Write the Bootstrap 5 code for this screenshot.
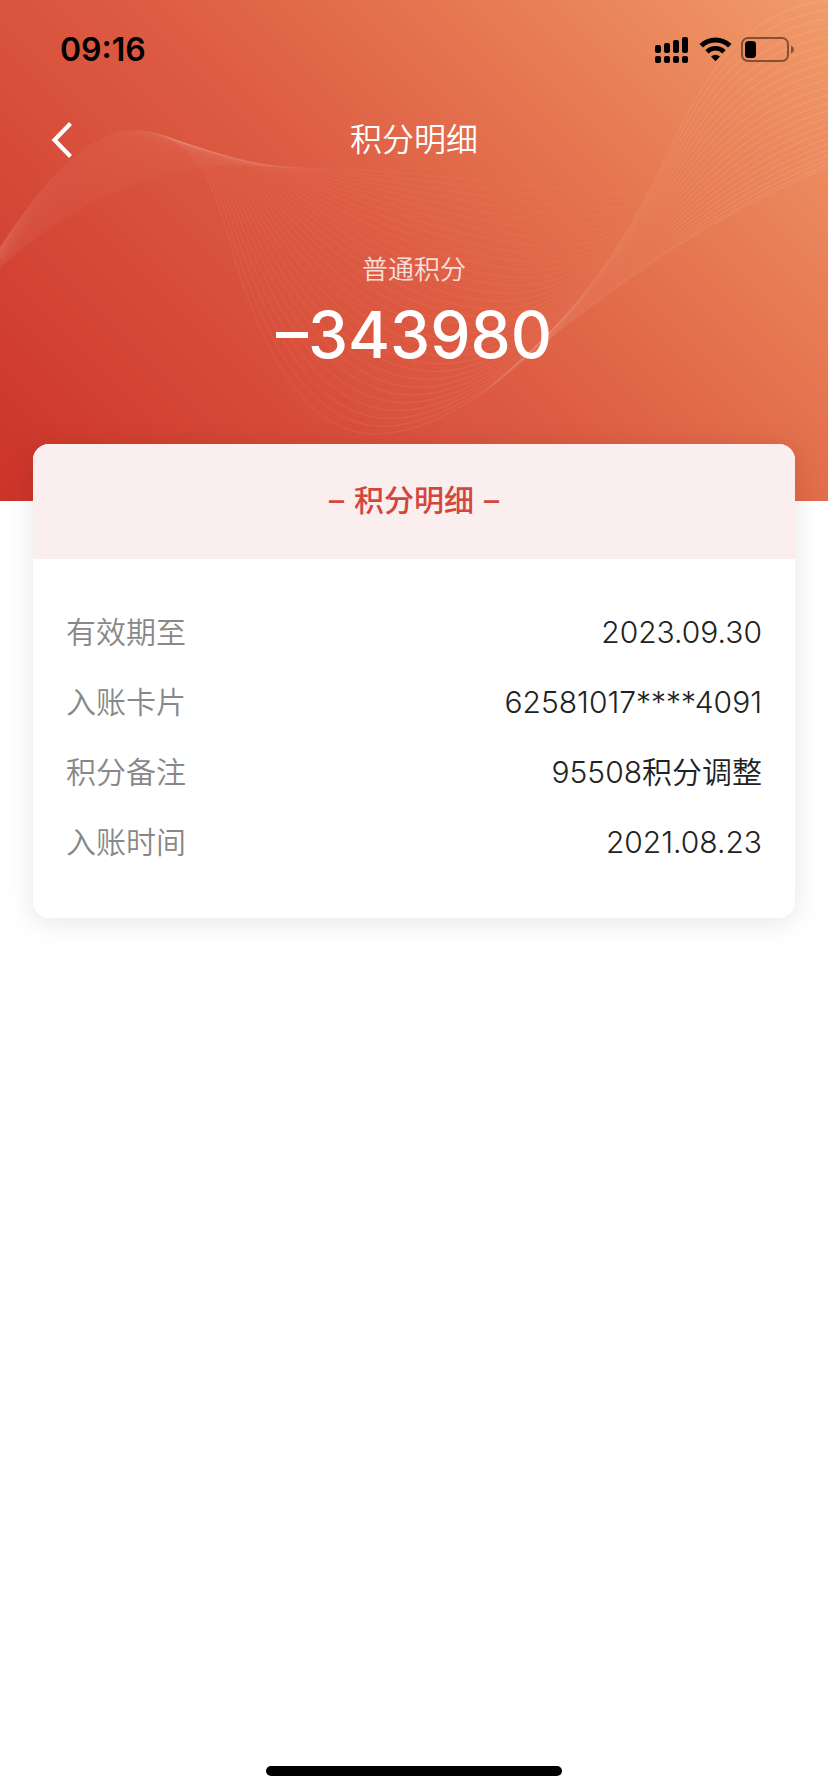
<!DOCTYPE html>
<html lang="zh-CN">
<head>
<meta charset="utf-8">
<meta name="viewport" content="width=device-width, initial-scale=1">
<title>积分明细</title>
<link href="https://cdn.jsdelivr.net/npm/bootstrap@5.3.0/dist/css/bootstrap.min.css" rel="stylesheet">
<style>
  body { font-family: Inter, "Noto Sans CJK SC", sans-serif; font-size: 30px; line-height: 40px; color: #222; }
  .hero { background: linear-gradient(45deg, #cc3329 0%, #d8503b 33%, #dd5c43 48%, #e57650 70%, #f19b6a 100%); padding-bottom: 57px; }
  .waves { pointer-events: none; }
  .waves path { fill: none; }
  .status-bar { padding: 30px 34px 0 60px; height: 100px; }
  .clock { font-size: 32px; font-weight: 600; color: #000; }
  .title-bar { padding: 0 46px; height: 80px; }
  .title-bar > * { flex: 1 1 0; }
  .page-title { font-size: 32px; font-weight: 350; line-height: 40px; }
  .back { color: #fff; line-height: 1; }
  .points-label { font-size: 26px; line-height: 32px; opacity: .8; font-weight: 350; padding-top: 74px; }
  .points-total { font-size: 64px; line-height: 80px; font-weight: 500; padding: 9px 0 69px; }
  .detail { margin: -57px 33px 0; border-radius: 16px; box-shadow: 0 4px 28px rgba(0, 0, 0, .1); }
  .detail-head { background: #faeeee; color: #d3463d; font-size: 30px; font-weight: 500; line-height: 40px; padding: 36px 0 39px; margin-right: 2px; border-radius: 16px 16px 0 0; gap: 10px; }
  .detail-rows { padding: 53px 33px 56px; gap: 30px; }
  .detail-rows dt { color: #888; font-weight: 350; }
  .detail-rows dd { font-weight: 350; }
  .home-bar { width: 296px; height: 10px; margin-bottom: 16px; }
</style>
</head>
<body class="bg-white">
<div class="d-flex flex-column min-vh-100">
  <header class="hero position-relative text-white overflow-hidden">
    <svg class="waves position-absolute top-0 start-0 w-100 h-100" viewBox="0 0 828 501" preserveAspectRatio="none" aria-hidden="true">
      <defs>
        <linearGradient id="lobeInk" gradientUnits="userSpaceOnUse" x1="0" y1="0" x2="828" y2="0">
          <stop offset="0" stop-color="#ffe4d8"/><stop offset=".3" stop-color="#ffe4d8" stop-opacity=".8"/><stop offset=".5" stop-color="#ffe4d8"/><stop offset=".82" stop-color="#ffe4d8" stop-opacity=".6"/>
        </linearGradient>
        <linearGradient id="fanInk" gradientUnits="userSpaceOnUse" x1="470" y1="0" x2="828" y2="0">
          <stop offset="0" stop-color="#ffe4d8" stop-opacity="0"/><stop offset=".3" stop-color="#ffe4d8" stop-opacity=".4"/><stop offset=".7" stop-color="#ffe4d8"/>
        </linearGradient>
      </defs>
      <g id="lobe" stroke="url(#lobeInk)"></g>
      <g id="fan" stroke="url(#fanInk)"></g>
    </svg>
    <div class="position-relative">
      <div class="status-bar d-flex justify-content-between align-items-start">
        <span class="clock">09:16</span>
        <svg width="142" height="40" viewBox="0 0 142 40" aria-hidden="true">
          <g>
            <rect x="3" y="15" width="6" height="8" rx="2"/><rect x="12" y="13" width="6" height="10" rx="2"/>
            <rect x="21" y="10" width="6" height="13" rx="2"/><rect x="30" y="7" width="6" height="16" rx="2"/>
            <rect x="3" y="26" width="6" height="7" rx="2"/><rect x="12" y="26" width="6" height="7" rx="2"/>
            <rect x="21" y="26" width="6" height="7" rx="2"/><rect x="30" y="26" width="6" height="7" rx="2"/>
          </g>
          <g fill="none" stroke="#000" stroke-width="5">
            <path d="M49.2 15.8A20.5 20.5 0 0 1 77.8 15.8"/>
            <path d="M55 21.8A12 12 0 0 1 72 21.8" stroke-width="4.6"/>
          </g>
          <path d="M59 26.5Q63.500 23 68 26.500L63.500 31.200Z"/>
          <rect x="90" y="8" width="46" height="23" rx="6" fill="none" stroke="#000" stroke-opacity=".45" stroke-width="2"/>
          <rect x="93" y="11" width="11" height="17" rx="3.500"/>
          <path d="M139 15.500Q142 17 142 19.500T139 23.500Z" fill-opacity=".45"/>
        </svg>
      </div>
      <div class="title-bar d-flex align-items-center">
        <div>
          <button type="button" class="back btn border-0 p-0 d-block" aria-label="返回">
            <svg class="d-block" width="28" height="40" viewBox="0 0 28 40" fill="none" stroke="currentColor" stroke-width="4.200" aria-hidden="true"><path d="M24.500 3.500L8.500 20L24.500 36.500"/></svg>
          </button>
        </div>
        <h1 class="page-title text-center m-0">积分明细</h1>
        <div></div>
      </div>
      <div class="points-label text-center">普通积分</div>
      <div class="points-total text-center">–343980</div>
    </div>
  </header>

  <main class="detail bg-white position-relative">
    <h2 class="detail-head d-flex justify-content-center m-0"><span>–</span><span>积分明细</span><span>–</span></h2>
    <dl class="detail-rows d-flex flex-column m-0">
      <div class="d-flex justify-content-between"><dt>有效期至</dt><dd class="m-0">2023.09.30</dd></div>
      <div class="d-flex justify-content-between"><dt>入账卡片</dt><dd class="m-0">62581017****4091</dd></div>
      <div class="d-flex justify-content-between"><dt>积分备注</dt><dd class="m-0">95508积分调整</dd></div>
      <div class="d-flex justify-content-between"><dt>入账时间</dt><dd class="m-0">2021.08.23</dd></div>
    </dl>
  </main>

  <div class="home-bar bg-black rounded-pill mx-auto mt-auto"></div>
</div>
<script src="https://cdn.jsdelivr.net/npm/bootstrap@5.3.0/dist/js/bootstrap.bundle.min.js"></script>
<script>
  // Each family of wave lines is blended between two outer curves (start point + cubic segments).
  function drawWaves(id, from, to, count, opacity, ease) {
    const group = document.getElementById(id);
    for (let i = 0; i < count; i++) {
      const t = Math.pow(i / (count - 1), ease);
      const p = from.map((v, k) => (v + (to[k] - v) * t).toFixed(1));
      const path = document.createElementNS('http://www.w3.org/2000/svg', 'path');
      path.setAttribute('d', 'M' + p.slice(0, 2).join(' ') + 'C' + p.slice(2).join(' '));
      path.setAttribute('stroke-opacity', opacity(t));
      group.appendChild(path);
    }
  }
  drawWaves('lobe',
    [0,248, 50,170, 95,131, 135,131, 185,131, 208,165, 228,235, 262,360, 310,434, 375,434, 440,434, 500,380, 551,340],
    [0,268, 60,210, 150,165, 230,165, 260,165, 300,168, 340,169, 440,174, 520,186, 600,192, 625,194, 645,194, 660,194],
    32, t => 0.1 - 0.05 * t, 1);
  drawWaves('fan',
    [470,402, 500,382, 550,335, 600,300, 680,240, 750,200, 828,167],
    [490,387, 540,345, 580,305, 615,250, 690,135, 700,20, 828,0],
    24, t => 0.15, 1.3);
</script>
</body>
</html>
